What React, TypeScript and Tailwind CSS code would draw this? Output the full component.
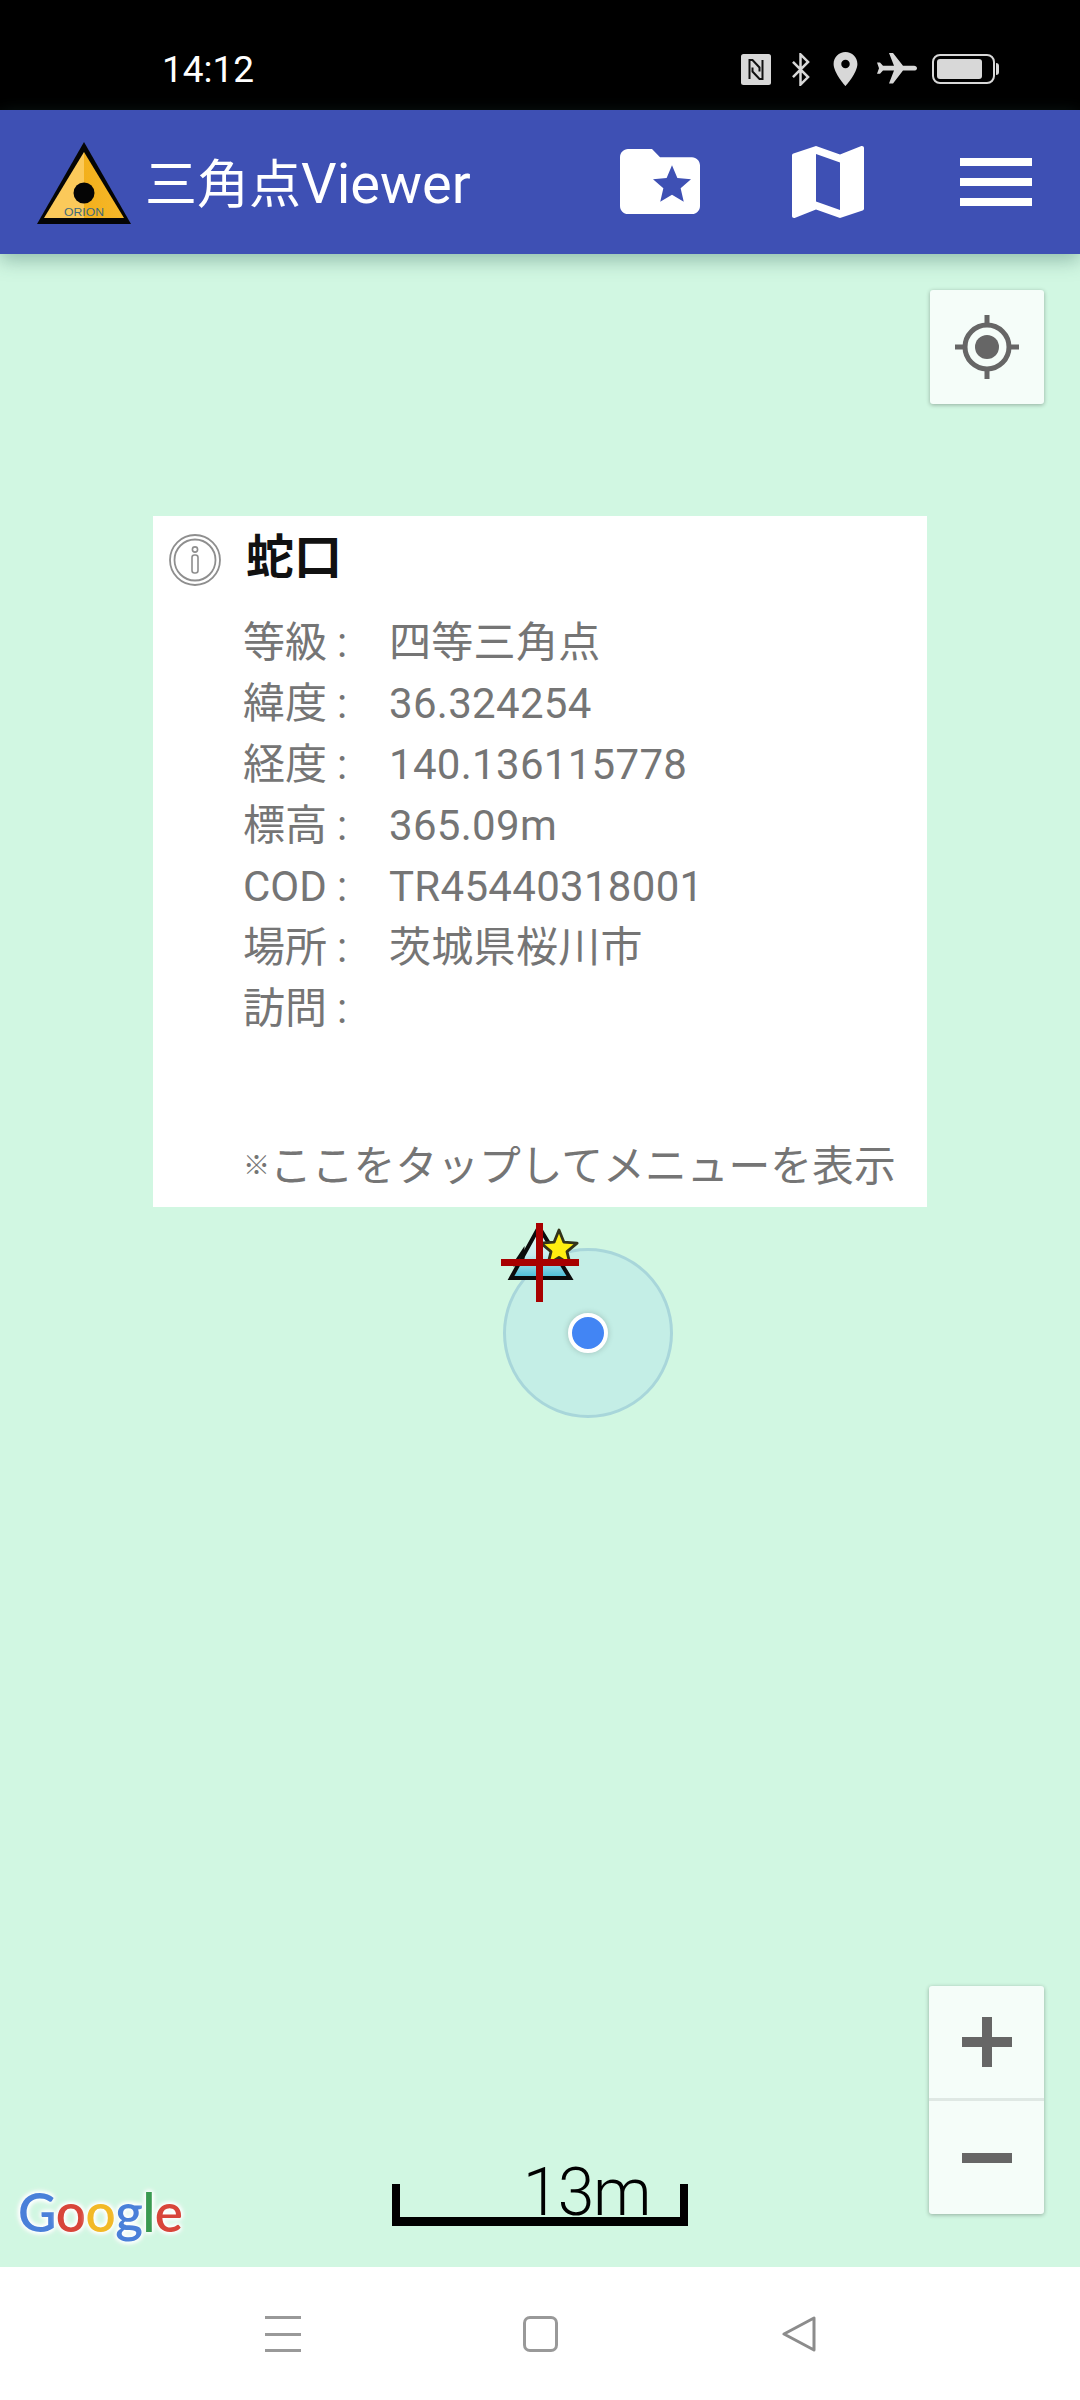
import React from "react";

const cjk = "font-['Roboto','Noto_Sans_CJK_JP',sans-serif]";

const rows = [
  ["等級", "四等三角点"],
  ["緯度", "36.324254"],
  ["経度", "140.136115778"],
  ["標高", "365.09m"],
  ["COD", "TR45440318001"],
  ["場所", "茨城県桜川市"],
  ["訪問", ""],
];

function StatusBar() {
  return (
    <div className="h-[110px] shrink-0 bg-black flex items-center pl-[162px] pr-[81px] pt-[28px]">
      <span className="font-['Roboto',sans-serif] text-[37px] leading-none text-white">14:12</span>
      <div className="ml-auto flex items-center text-[#d8d8d8]">
        {/* nfc */}
        <svg className="w-[30px] h-[31px]" viewBox="0 0 30 31">
          <rect width="30" height="31" rx="2.5" fill="currentColor" />
          <path d="M8.5 25V6h3l7 7.5v4M21.5 6v19h-3l-7-7.5v-4" fill="none" stroke="#111" strokeWidth="2" />
        </svg>
        {/* bluetooth */}
        <svg className="w-[21px] h-[33px] ml-[19px]" viewBox="5 0 14 24" fill="none" stroke="currentColor" strokeWidth="1.8">
          <path d="M6.5 6.5 17.5 17.5 12 23V1l5.5 5.5L6.5 17.5" />
        </svg>
        {/* location pin */}
        <svg className="w-[27px] h-[34px] ml-[21px]" viewBox="5 2 14 20" fill="currentColor">
          <path d="M12 2C8.13 2 5 5.13 5 9c0 5.25 7 13 7 13s7-7.75 7-13c0-3.87-3.13-7-7-7zm0 9.5c-1.38 0-2.5-1.12-2.5-2.5s1.12-2.5 2.5-2.5 2.5 1.12 2.5 2.5-1.12 2.5-2.5 2.5z" />
        </svg>
        {/* airplane mode */}
        <svg className="w-[40px] h-[32px] ml-[18px]" viewBox="2 2 20 20" preserveAspectRatio="none" fill="currentColor">
          <g transform="rotate(90 12 12)">
            <path d="M21 16v-2l-8-5V3.5c0-.83-.67-1.5-1.5-1.5S10 2.67 10 3.5V9l-8 5v2l8-2.5V19l-2 1.5V22l3.5-1 3.5 1v-1.5L13 19v-5.5l8 2.5z" />
          </g>
        </svg>
        {/* battery */}
        <div className="ml-[15px] flex items-center">
          <div className="w-[63px] h-[30px] rounded-[8px] border-2 border-[#d8d8d8] p-[3px]">
            <div className="h-full w-[45px] rounded-[3px] bg-[#d8d8d8]" />
          </div>
          <div className="w-[3px] h-[12px] bg-[#d8d8d8] rounded-r-sm ml-[1px]" />
        </div>
      </div>
    </div>
  );
}

function AppBar() {
  return (
    <header className="relative z-10 h-[144px] shrink-0 bg-[#3e50b4] flex items-center shadow-[0_6px_18px_rgba(50,100,90,0.4)]">
      <svg className="w-[94px] h-[82px] ml-[37px] mb-[-2px]" viewBox="0 0 94 82">
        <defs>
          <linearGradient id="cone" x1="0" x2="1" y1="0" y2="0">
            <stop offset="0" stopColor="#fbc95a" />
            <stop offset="0.5" stopColor="#fbc95a" />
            <stop offset="0.5" stopColor="#f3b01c" />
            <stop offset="1" stopColor="#f6b82a" />
          </linearGradient>
        </defs>
        <path d="M47 0 94 82H0z" fill="#050505" />
        <path d="M47 10 87 76H7z" fill="url(#cone)" />
        <circle cx="47" cy="51" r="10.5" fill="#050505" />
        <text x="47" y="74" textAnchor="middle" fontFamily="Liberation Sans, sans-serif" fontSize="11" textLength="40" lengthAdjust="spacingAndGlyphs" fill="#3f6a7a">ORION</text>
      </svg>
      <h1 className={`${cjk} ml-[14px] text-[52px] leading-none text-white mt-[4px]`}>
        三角点<span className="text-[56px]">Viewer</span>
      </h1>
      <svg className="absolute left-[620px] top-[39px] w-[80px] h-[65px]" viewBox="2 4 20 16" preserveAspectRatio="none" fill="#fff">
        <path d="M20 6h-8l-2-2H4c-1.1 0-2 .9-2 2v12c0 1.1.9 2 2 2h16c1.1 0 2-.9 2-2V8c0-1.1-.9-2-2-2zm-2.06 11L15 15.28 12.06 17l.78-3.33-2.59-2.24 3.41-.29L15 8l1.34 3.14 3.41.29-2.59 2.24.78 3.33z" />
      </svg>
      <svg className="absolute left-[792px] top-[36px] w-[72px] h-[72px]" viewBox="3 3 18 18" fill="#fff">
        <path d="M20.5 3l-.16.03L15 5.1 9 3 3.36 4.9c-.21.07-.36.25-.36.48V20.5c0 .28.22.5.5.5l.16-.03L9 18.9l6 2.1 5.64-1.9c.21-.07.36-.25.36-.48V3.5c0-.28-.22-.5-.5-.5zM15 19l-6-2.11V5l6 2.11V19z" />
      </svg>
      <div className="absolute left-[960px] top-[48px] w-[72px] flex flex-col gap-[12px]">
        <div className="h-[8px] bg-white" />
        <div className="h-[8px] bg-white" />
        <div className="h-[8px] bg-white" />
      </div>
    </header>
  );
}

function InfoWindow() {
  return (
    <div className={`${cjk} absolute left-[153px] top-[262px] w-[774px] h-[691px] bg-white text-[#757575] pt-[17px] pl-[90px]`}>
      <svg className="absolute left-[16px] top-[18px] w-[52px] h-[52px]" viewBox="0 0 52 52" fill="none" stroke="#8e8e8e">
        <circle cx="26" cy="26" r="25" strokeWidth="1.8" />
        <circle cx="26" cy="26" r="20.5" strokeWidth="1.8" />
        <circle cx="26" cy="15.5" r="2.6" strokeWidth="1.6" />
        <rect x="23" y="21" width="6" height="18" rx="2.5" strokeWidth="1.6" />
      </svg>
      <div className="h-[50px] pl-[3px] text-[48px] leading-[50px] font-bold text-[#111]">蛇口</div>
      <div className="mt-[29px] flex flex-col">
        {rows.map(([label, value]) => (
          <div key={label} className="h-[61px] flex items-center text-[42px] leading-none">
            <span className="w-[94px]">{label}</span>
            <span className="w-[52px]">:</span>
            <span className="tracking-[0.3px]">{value}</span>
          </div>
        ))}
      </div>
      <div className="mt-[97px] h-[61px] flex items-center text-[41.8px] leading-none whitespace-nowrap">
        <span className="w-[27px] text-[27px] font-bold">※</span>
        <span>ここをタップしてメニューを表示</span>
      </div>
    </div>
  );
}

function TriangleMarker() {
  return (
    <>
      <div className="absolute left-[503px] top-[994px] w-[170px] h-[170px] rounded-full bg-[#c4eee6] border-[3px] border-[#a8d6da]" />
      <svg className="absolute left-[495px] top-[962px] w-[95px] h-[90px]" viewBox="0 0 95 90">
        <defs>
          <linearGradient id="peak" x1="0" x2="0" y1="0" y2="1">
            <stop offset="0" stopColor="#eafaf4" />
            <stop offset="0.55" stopColor="#c8edf0" />
            <stop offset="1" stopColor="#45bcd6" />
          </linearGradient>
        </defs>
        <path d="M44 11 75 62H16z" fill="url(#peak)" stroke="#0b0b0b" strokeWidth="4" strokeLinejoin="miter" />
        <path d="M18 50 28 35v15" fill="none" stroke="#0b0b0b" strokeWidth="3" />
        <path transform="translate(64 33) scale(1.12) translate(-63 -32)" d="M63 15 67.4 25.9 79.2 26.7 70.1 34.3 73 45.8 63 39.5 53 45.8 55.9 34.3 46.8 26.7 58.6 25.9z" fill="#ffee10" stroke="#33331a" strokeWidth="2.5" strokeLinejoin="round" />
        <rect x="6" y="43" width="78" height="7" fill="#a80000" />
        <rect x="41" y="7" width="7" height="79" fill="#a80000" />
      </svg>
      <div className="absolute left-[568px] top-[1059px] w-[40px] h-[40px] rounded-full bg-[#4285f4] border-[4px] border-white shadow-[0_0_6px_rgba(0,0,0,0.2)]" />
    </>
  );
}

function Controls() {
  return (
    <>
      <div className="absolute left-[930px] top-[36px] w-[114px] h-[114px] rounded-[3px] bg-[#f5fdf9] shadow-[0_1px_4px_rgba(0,0,0,0.3)] flex items-center justify-center">
        <svg className="w-[66px] h-[66px]" viewBox="0 0 66 66" fill="none" stroke="#666">
          <circle cx="33" cy="33" r="22" strokeWidth="5" />
          <circle cx="33" cy="33" r="12" fill="#666" stroke="none" />
          <path d="M33 1v10M33 55v10M1 33h10M55 33h10" strokeWidth="5" />
        </svg>
      </div>
      <div className="absolute left-[929px] top-[1732px] w-[115px] h-[228px] rounded-[3px] bg-[#f5fdf9] shadow-[0_1px_4px_rgba(0,0,0,0.3)] flex flex-col">
        <div className="relative h-[115px] flex items-center justify-center border-b-[3px] border-[#dfe8e4]">
          <div className="w-[50px] h-[10px] bg-[#666]" />
          <div className="absolute w-[10px] h-[50px] bg-[#666]" />
        </div>
        <div className="flex-1 flex items-center justify-center">
          <div className="w-[50px] h-[10px] bg-[#666]" />
        </div>
      </div>
    </>
  );
}

function MapFooter() {
  return (
    <>
      <div className="absolute left-[18px] top-[1926px] font-['Lato',sans-serif] font-semibold text-[53px] leading-[64px] tracking-[-0.5px] [text-shadow:0_0_4px_#fff,0_0_5px_#fff,0_0_6px_#fff,0_0_7px_#fff]">
        <span className="text-[#4a80d9]">G</span>
        <span className="text-[#d8453a]">o</span>
        <span className="text-[#f2b927]">o</span>
        <span className="text-[#4a80d9]">g</span>
        <span className="text-[#3a9a50]">l</span>
        <span className="text-[#d8453a]">e</span>
      </div>
      <div className="absolute left-[392px] top-[1930px] w-[296px] h-[42px] border-x-[8px] border-b-[9px] border-black flex justify-end pr-[30px]">
        <span className="font-['Roboto',sans-serif] font-light text-[66px] leading-none tracking-[-1.5px] text-black mt-[-24px] h-[33px]">13m</span>
      </div>
    </>
  );
}

function NavBar() {
  return (
    <nav className="relative h-[133px] shrink-0 bg-white">
      <div className="absolute left-[265px] top-[49px] w-[36px] h-[36px] flex flex-col justify-between">
        <div className="h-[3px] bg-[#999]" />
        <div className="h-[3px] bg-[#999]" />
        <div className="h-[3px] bg-[#999]" />
      </div>
      <div className="absolute left-[523px] top-[49px] w-[35px] h-[36px] rounded-[7px] border-[3px] border-[#999]" />
      <svg className="absolute left-[781px] top-[49px] w-[36px] h-[36px]" viewBox="0 0 36 36" fill="none" stroke="#8c8c8c" strokeWidth="3" strokeLinejoin="round">
        <path d="M3 18 33 2v32z" />
      </svg>
    </nav>
  );
}

export default function App() {
  return (
    <div className="w-[1080px] h-[2400px] flex flex-col overflow-hidden">
      <StatusBar />
      <AppBar />
      <main className="relative flex-1 bg-[#d1f7e2]">
        <TriangleMarker />
        <InfoWindow />
        <Controls />
        <MapFooter />
      </main>
      <NavBar />
    </div>
  );
}
